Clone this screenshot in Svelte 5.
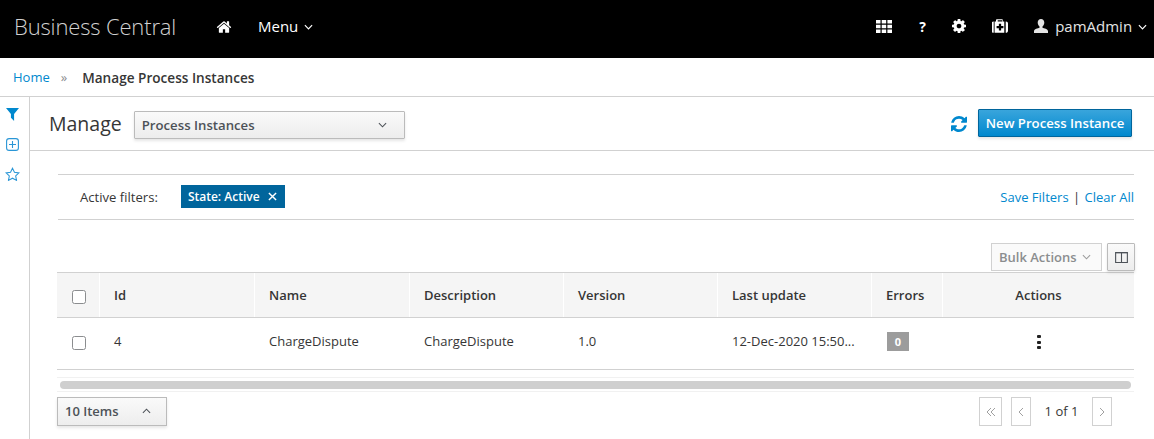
<script>
  const cols = [
    { label: 'Id', value: '4', w: 155 },
    { label: 'Name', value: 'ChargeDispute', w: 155 },
    { label: 'Description', value: 'ChargeDispute', w: 154 },
    { label: 'Version', value: '1.0', w: 154 },
    { label: 'Last update', value: '12-Dec-2020 15:50...', w: 154 }
  ];
</script>

<div class="page">
  <header class="topbar">
    <div class="brand">Business Central</div>
    <svg class="home" viewBox="0 128 1792 1408" width="16" height="13"><path fill="#fff" d="M1472 992v480q0 26-19 45t-45 19h-384v-384h-256v384h-384q-26 0-45-19t-19-45v-480q0-1 .5-3t.5-3l575-474 575 474q1 2 1 6zm223-69l-62 74q-8 9-21 11h-3q-13 0-21-7l-692-577-692 577q-12 8-24 7-13-2-21-11l-62-74q-8-10-7-23.500t11-21.500l719-599q32-26 76-26t76 26l244 204v-195q0-14 9-23t23-9h192q14 0 23 9t9 23v408l219 182q10 8 11 21.500t-7 23.500z"/></svg>
    <div class="menu">Menu <svg class="chev" viewBox="0 0 10 6" width="9" height="6"><path d="M1 1l4 4 4-4" fill="none" stroke="#fff" stroke-width="1.3"/></svg></div>
    <div class="spacer"></div>
    <svg class="tool grid" viewBox="0 0 16 13" width="16" height="13"><path fill="#fff" d="M0 0h4.500v3.500H0zM5.700 0h4.500v3.500H5.700zM11.400 0H16v3.500h-4.600zM0 4.700h4.500v3.500H0zM5.700 4.700h4.500v3.500H5.700zM11.400 4.700H16v3.500h-4.600zM0 9.400h4.500V13H0zM5.700 9.400h4.500V13H5.700zM11.400 9.400H16V13h-4.600z"/></svg>
    <span class="tool q">?</span>
    <svg class="tool gear" viewBox="128 128 1536 1536" width="14" height="14"><path fill="#fff" d="M1152 896q0-106-75-181t-181-75-181 75-75 181 75 181 181 75 181-75 75-181zm512-109v222q0 12-8 23t-20 13l-185 28q-19 54-39 91 35 50 107 138 10 12 10 25t-9 23q-27 37-99 108t-94 71q-12 0-26-9l-138-108q-44 23-91 38-16 136-29 186-7 28-36 28h-222q-14 0-24.500-8.500t-11.500-21.500l-28-184q-49-16-90-37l-141 107q-10 9-25 9-14 0-25-11-126-114-165-168-7-10-7-23 0-12 8-23 15-21 51-66.500t54-70.500q-27-50-41-99l-183-27q-13-2-21-12.500t-8-23.500v-222q0-12 8-23t19-13l186-28q14-46 39-92-40-57-107-138-10-12-10-24 0-10 9-23 26-36 98.500-107.500t94.500-71.500q13 0 26 10l138 107q44-23 91-38 16-136 29-186 7-28 36-28h222q14 0 24.500 8.500t11.500 21.500l28 184q49 16 90 37l142-107q9-9 24-9 13 0 25 10 129 119 165 170 7 8 7 22 0 12-8 23-15 21-51 66.500t-54 70.500q26 50 41 98l183 28q13 2 21 12.500t8 23.500z"/></svg>
    <svg class="tool case" viewBox="0 128 1792 1536" width="16" height="14"><path fill="#fff" d="M1280 1120v-192q0-14-9-23t-23-9h-224v-224q0-14-9-23t-23-9h-192q-14 0-23 9t-9 23v224h-224q-14 0-23 9t-9 23v192q0 14 9 23t23 9h224v224q0 14 9 23t23 9h192q14 0 23-9t9-23v-224h224q14 0 23-9t9-23zm-640-736h512v-128h-512v128zm-448 0v1280h-32q-92 0-158-66t-66-158v-832q0-92 66-158t158-66h32zm1184 0v1280h-1088v-1280h160v-160q0-40 28-68t68-28h576q40 0 68 28t28 68v160h160zm416 224v832q0 92-66 158t-158 66h-32v-1280h32q92 0 158 66t66 158z"/></svg>
    <svg class="user" viewBox="0 0 14 14" width="14" height="14"><path fill="#e4e4e4" d="M7 0c2 0 3.300 1.500 3.300 3.600 0 1.600-.8 3.200-1.800 3.900v1.200c1.500.5 5.500 1.400 5.500 3.300V14H0v-2c0-1.900 4-2.800 5.500-3.300V7.500c-1-.7-1.800-2.300-1.800-3.900C3.700 1.500 5 0 7 0z"/></svg>
    <div class="username">pamAdmin <svg class="chev" viewBox="0 0 10 6" width="9" height="6"><path d="M1 1l4 4 4-4" fill="none" stroke="#fff" stroke-width="1.300"/></svg></div>
  </header>

  <nav class="crumbs">
    <a href="#home">Home</a>
    <span class="sep">»</span>
    <strong>Manage Process Instances</strong>
  </nav>

  <div class="body">
    <aside class="side">
      <svg class="s-filter" viewBox="0 0 14 14" width="13" height="13"><path fill="#0088ce" d="M0 0h14L8.700 6.500V14L5.300 10.500v-4z"/></svg>
      <svg class="s-plus" viewBox="0 0 13 13" width="13" height="13"><rect x=".6" y=".6" width="11.800" height="11.800" rx="2.500" fill="none" stroke="#2a96d6" stroke-width="1.100"/><path d="M6.500 3v7M3 6.500h7" stroke="#2a96d6" stroke-width="1.100"/></svg>
      <svg class="s-star" viewBox="0 0 16 15" width="15" height="14"><path fill="none" stroke="#2a96d6" stroke-width="1.100" d="M8 1.300l2.100 4.400 4.800.6-3.500 3.300.9 4.700L8 12l-4.300 2.300.9-4.700L1.100 6.300l4.800-.6z"/></svg>
    </aside>

    <main class="main">
      <div class="toolbar">
        <h1>Manage</h1>
        <div class="select">
          <span>Process Instances</span>
          <svg viewBox="0 0 10 6" width="9" height="6"><path d="M1 1l4 4 4-4" fill="none" stroke="#4d5258" stroke-width="1.200"/></svg>
        </div>
        <div class="spacer"></div>
        <svg class="refresh" viewBox="0 0 1536 1536" width="16" height="16"><path fill="#0088ce" d="M1511 928q0 5-1 7-64 268-268 434.500t-478 166.500q-146 0-282.500-55t-243.500-157l-129 129q-19 19-45 19t-45-19-19-45v-448q0-26 19-45t45-19h448q26 0 45 19t19 45-19 45l-137 137q71 66 161 102t187 36q134 0 250-65t186-179q11-17 53-117 8-23 30-23h192q13 0 22.500 9.500t9.500 22.500zm25-800v448q0 26-19 45t-45 19h-448q-26 0-45-19t-19-45 19-45l138-138q-148-137-349-137-134 0-250 65t-186 179q-11 17-53 117-8 23-30 23h-199q-13 0-22.500-9.500t-9.500-22.500v-7q65-268 270-434.500t480-166.500q146 0 284 55.500t245 156.500l130-129q19-19 45-19t45 19 19 45z"/></svg>
        <button class="primary">New Process Instance</button>
      </div>

      <div class="content">
        <div class="filters">
          <span class="filters-label">Active filters:</span>
          <span class="chip">State: Active <svg viewBox="0 0 10 10" width="9" height="9"><path d="M1 1l8 8M9 1l-8 8" stroke="#fff" stroke-width="1.600"/></svg></span>
          <div class="spacer"></div>
          <span class="links"><a href="#save">Save Filters</a> <span class="bar">|</span> <a href="#clear">Clear All</a></span>
        </div>

        <div class="actions-row">
          <div class="bulk">Bulk Actions <svg viewBox="0 0 10 6" width="9" height="6"><path d="M1 1l4 4 4-4" fill="none" stroke="#9c9c9c" stroke-width="1.200"/></svg></div>
          <div class="columns"><svg viewBox="0 0 14 12" width="13" height="11"><path d="M.6.6h12.800v10.800H.6zM7 .6v10.800" fill="none" stroke="#4d5258" stroke-width="1.200"/><path d="M.6.6h12.800" stroke="#4d5258" stroke-width="1.800"/></svg></div>
        </div>

        <div class="table">
          <div class="row head">
            <div class="cell check"><span class="box"></span></div>
            {#each cols as c}
              <div class="cell" style="width:{c.w}px">{c.label}</div>
            {/each}
            <div class="cell errors">Errors</div>
            <div class="cell act">Actions</div>
          </div>
          <div class="row data">
            <div class="cell check"><span class="box"></span></div>
            {#each cols as c}
              <div class="cell" style="width:{c.w}px">{c.value}</div>
            {/each}
            <div class="cell errors"><span class="badge">0</span></div>
            <div class="cell act"><span class="kebab"><i></i><i></i><i></i></span></div>
          </div>
        </div>

        <div class="scroll"><div class="thumb"></div></div>

        <div class="footer">
          <div class="items"><span>10 Items</span><svg viewBox="0 0 10 6" width="9" height="6"><path d="M1 5l4-4 4 4" fill="none" stroke="#4d5258" stroke-width="1.200"/></svg></div>
          <div class="spacer"></div>
          <div class="pager first"><svg viewBox="0 0 10 10" width="10" height="10"><path d="M5 1L1 5l4 4M9 1L5 5l4 4" fill="none" stroke="#a0a0a0" stroke-width="1"/></svg></div>
          <div class="pager prev"><svg viewBox="0 0 6 10" width="6" height="10"><path d="M5 1L1 5l4 4" fill="none" stroke="#a0a0a0" stroke-width="1"/></svg></div>
          <span class="pageinfo">1 of 1</span>
          <div class="pager next"><svg viewBox="0 0 6 10" width="6" height="10"><path d="M1 1l4 4-4 4" fill="none" stroke="#a0a0a0" stroke-width="1"/></svg></div>
        </div>
      </div>
    </main>
  </div>
</div>

<style>
  :global(body) {
    margin: 0;
    background: #fff;
  }
  .page {
    width: 1154px;
    height: 439px;
    overflow: hidden;
    font-family: "Open Sans", sans-serif;
    font-size: 13px;
    color: #363636;
    background: #fff;
  }
  .spacer { flex: 1; }
  a { color: #0088ce; text-decoration: none; }

  .topbar {
    height: 58px;
    background: #000;
    display: flex;
    align-items: center;
    color: #fff;
    box-sizing: border-box;
    padding: 0 7px 6px 14px;
  }
  .brand {
    font-size: 22px;
    font-weight: 300;
    letter-spacing: -0.15px;
    color: #d1d1d1;
    width: 202px;
    margin-top: -1px;
  }
  .home { margin-right: 26px; }
  .menu { font-size: 15px; }
  .topbar .chev { margin-left: 2px; vertical-align: 2px; }
  .tool { flex: none; }
  .grid { margin-right: 27px; }
  .q { font-size: 14px; font-weight: 700; width: 8px; margin-right: 25px; }
  .gear { margin-right: 26px; }
  .case { margin-right: 26px; }
  .user { margin-right: 7px; }
  .username { font-size: 15px; color: #e4e4e4; }

  .crumbs {
    height: 39px;
    box-sizing: border-box;
    border-bottom: 1px solid #d1d1d1;
    display: flex;
    align-items: center;
    padding: 0 0 0 13px;
    font-size: 13px;
  }
  .sep { color: #8b8d8f; margin: 0 15px 0 11px; font-size: 13px; }
  .crumbs strong { font-weight: 600; font-size: 13.6px; color: #363636; }

  .body { display: flex; height: 342px; }
  .side {
    border-right: 1px solid #d1d1d1;
    display: flex;
    flex-direction: column;
    align-items: flex-start;
    padding-top: 11px;
    padding-left: 6px;
    box-sizing: border-box;
    flex: none;
    width: 30px;
  }
  .s-plus { margin-top: 17px; }
  .s-star { margin-top: 16px; margin-left: -1px; }
  .main { flex: 1; min-width: 0; }

  .toolbar {
    height: 54px;
    box-sizing: border-box;
    border-bottom: 1px solid #d1d1d1;
    display: flex;
    align-items: center;
    padding: 0 22px 0 19px;
  }
  h1 {
    font-size: 19.5px;
    font-weight: 400;
    margin: -1px 12px 0 0;
    color: #363636;
  }
  .select {
    width: 271px;
    height: 28px;
    margin-top: 3px;
    box-sizing: border-box;
    border: 1px solid #bbb;
    border-radius: 1px;
    background: linear-gradient(#fafafa, #ededed);
    box-shadow: 0 2px 3px rgba(3, 3, 3, .1);
    display: flex;
    align-items: center;
    justify-content: space-between;
    padding: 0 17px 0 7px;
    font-weight: 600;
    font-size: 13.2px;
    color: #4d5258;
  }
  .refresh { margin: 1px 11px 0 0; }
  .primary {
    font: 600 13.2px "Open Sans", sans-serif;
    color: #fff;
    height: 28px;
    width: 154px;
    padding: 0;
    border: 1px solid #00659c;
    border-radius: 1px;
    background: linear-gradient(#39a5dc, #0088ce);
    box-shadow: 0 2px 3px rgba(3, 3, 3, .1);
    margin-top: -2px;
  }

  .content { padding: 23px 20px 0 28px; }
  .filters {
    height: 46px;
    box-sizing: border-box;
    border-top: 1px solid #d1d1d1;
    border-bottom: 1px solid #d1d1d1;
    display: flex;
    align-items: center;
    padding-left: 22px;
  }
  .filters-label { margin-right: 23px; font-size: 13.1px; }
  .chip {
    background: #00659c;
    color: #fff;
    font-weight: 600;
    font-size: 12px;
    height: 23px;
    box-sizing: border-box;
    display: inline-flex;
    align-items: center;
    gap: 8px;
    padding: 0 8px 0 7px;
    margin-top: -1px;
  }
  .bar { color: #363636; margin: 0 1px; }

  .actions-row {
    display: flex;
    justify-content: flex-end;
    align-items: flex-start;
    margin-top: 23px;
    height: 30px;
    gap: 5px;
  }
  .bulk {
    width: 111px;
    height: 28px;
    box-sizing: border-box;
    border: 1px solid #d1d1d1;
    background: #fafafa;
    color: #8b8d8f;
    font-weight: 600;
    display: flex;
    align-items: center;
    gap: 5px;
    padding-left: 7px;
  }
  .columns {
    width: 28px;
    height: 28px;
    box-sizing: border-box;
    border: 1px solid #bbb;
    border-radius: 1px;
    background: linear-gradient(#fafafa, #ededed);
    box-shadow: 0 2px 3px rgba(3, 3, 3, .1);
    display: flex;
    align-items: center;
    justify-content: center;
    margin-right: -1px;
  }

  .table { margin: -1px 0 0 -1px; }
  .row { display: flex; box-sizing: border-box; }
  .head {
    height: 46px;
    background: #f5f5f5;
    border-top: 1px solid #d1d1d1;
    border-bottom: 1px solid #d1d1d1;
    font-weight: 600;
  }
  .data {
    height: 52px;
    border-bottom: 1px solid #d1d1d1;
  }
  .cell {
    box-sizing: border-box;
    display: flex;
    align-items: center;
    padding-left: 14px;
    flex: none;
  }
  .data .cell { padding-bottom: 6px; }
  .head .cell { border-right: 1px solid #fff; }
  .head .cell:last-child { border-right: 0; }
  .cell.check { width: 43px; padding-left: 15px; }
  .head .check .box { margin-top: 4px; }
  .data .cell.check { padding-bottom: 2px; }
  .box {
    width: 12px;
    height: 12px;
    border: 1px solid #8b8d8f;
    border-radius: 2.5px;
    background: #fff;
  }
  .errors { width: 71px; }
  .act { flex: 1; justify-content: center; padding: 0; }
  .data .cell.act { padding: 0 0 3px; }
  .data .cell.errors { padding-bottom: 0; }
  .badge {
    background: #9c9c9c;
    color: #fff;
    font-size: 11px;
    font-weight: 700;
    width: 22px;
    height: 19px;
    display: flex;
    align-items: center;
    justify-content: center;
    margin: 0 0 4px 1px;
  }
  .kebab { display: flex; flex-direction: column; gap: 2.5px; margin-left: 1px; }
  .kebab i { width: 4px; height: 3px; background: #222; border-radius: 1px; }

  .scroll {
    margin: 7px 0 0 -1px;
    height: 15px;
    box-sizing: border-box;
    border-top: 1px solid #f1f1f1;
    border-bottom: 1px solid #f1f1f1;
    display: flex;
    align-items: center;
    padding: 0 3px;
  }
  .thumb { flex: 1; height: 8px; background: #cfcfcf; border-radius: 4px; }

  .footer {
    display: flex;
    align-items: flex-start;
    margin: 5px 0 0 -1px;
  }
  .items {
    width: 110px;
    height: 29px;
    box-sizing: border-box;
    border: 1px solid #bbb;
    background: linear-gradient(#fafafa, #ededed);
    box-shadow: 0 2px 3px rgba(3, 3, 3, .1);
    display: flex;
    align-items: center;
    justify-content: space-between;
    padding: 0 15px 1px 7px;
    font-weight: 600;
    color: #4d5258;
  }
  .pager {
    height: 29px;
    box-sizing: border-box;
    border: 1px solid #d1d1d1;
    display: flex;
    align-items: center;
    justify-content: center;
  }
  .first { width: 23px; margin-right: 9px; }
  .prev { width: 20px; }
  .next { width: 20px; margin-right: 22px; }
  .pageinfo { width: 61px; text-align: center; line-height: 29px; color: #363636; }
</style>
